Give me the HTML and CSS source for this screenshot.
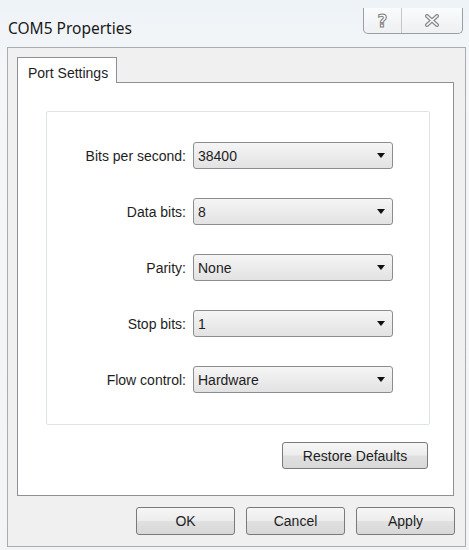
FILE: index.html
```html
<!DOCTYPE html>
<html lang="en">

<head>
  <meta charset="UTF-8">
  <title>COM5 Properties</title>
  <link rel="stylesheet" href="styles.css">
</head>

<body>
  <div class="window">
    <div class="titlebar">
      <span class="title">COM5 Properties</span>
      <div class="caption-buttons">
        <button class="cap help">?</button>
        <button class="cap close">
          <svg width="16" height="13" viewBox="0 0 16 13">
            <path d="M3 2 L13 11 M13 2 L3 11" stroke="#8a8a8a" stroke-width="4" stroke-linecap="round" fill="none" />
            <path d="M3 2 L13 11 M13 2 L3 11" stroke="#fbfbfb" stroke-width="1.6" stroke-linecap="round" fill="none" />
          </svg>
        </button>
      </div>
    </div>

    <div class="client">
      <div class="tabs">
        <div class="tab active">Port Settings</div>
      </div>
      <div class="tab-panel">
        <div class="group">
          <div class="fields">
            <label>Bits per second:</label>
            <div class="combo"><span>38400</span><span class="arrow"></span></div>
            <label>Data bits:</label>
            <div class="combo"><span>8</span><span class="arrow"></span></div>
            <label>Parity:</label>
            <div class="combo"><span>None</span><span class="arrow"></span></div>
            <label>Stop bits:</label>
            <div class="combo"><span>1</span><span class="arrow"></span></div>
            <label>Flow control:</label>
            <div class="combo"><span>Hardware</span><span class="arrow"></span></div>
          </div>
        </div>
        <div class="panel-actions">
          <button class="btn restore">Restore Defaults</button>
        </div>
      </div>
      <div class="dialog-actions">
        <button class="btn">OK</button>
        <button class="btn">Cancel</button>
        <button class="btn">Apply</button>
      </div>
    </div>
  </div>
</body>

</html>
```

FILE: styles.css
```css
body {
  margin: 0;
  padding: 0;
  background: linear-gradient(180deg, #eef3f7 0%, #f4f6f8 12%, #f3f4f5 100%);
  font-family: 'Liberation Sans', Arial, sans-serif;
  color: #1e1e1e;
}

.window {
  width: 469px;
  height: 550px;
  box-sizing: border-box;
  padding: 0 3px 3px 7px;
  display: flex;
  flex-direction: column;
}

/* title bar */

.titlebar {
  height: 47px;
  display: flex;
  align-items: flex-start;
  padding-left: 1px;
}

.title {
  margin-top: 18px;
  font-family: 'Noto Sans', sans-serif;
  font-size: 15.5px;
  line-height: 20px;
  color: #1a1a1a;
}

.caption-buttons {
  margin-left: auto;
  margin-right: 3px;
  margin-top: 8px;
  display: flex;
  height: 25px;
  border: 1px solid #9a9fa6;
  border-top: none;
  border-radius: 0 0 5px 5px;
  background: linear-gradient(180deg, #fafbfc, #eef0f2);
}

.cap {
  border: none;
  background: none;
  padding: 0;
  margin: 0;
  display: flex;
  align-items: center;
  justify-content: center;
}

.cap.help {
  width: 38px;
  border-right: 1px solid #c4c8cc;
  font-family: 'DejaVu Sans', sans-serif;
  font-weight: bold;
  font-size: 17px;
  color: #fbfbfb;
  -webkit-text-stroke: 1px #7e7e7e;
}

.cap.close {
  width: 60px;
}

/* client area */

.client {
  flex: 1;
  border: 1px solid #a9adb2;
  background: #f0f0f0;
  padding: 9px 11px 0 9px;
  display: flex;
  flex-direction: column;
}

.tabs {
  display: flex;
}

.tab {
  width: 100px;
  height: 26px;
  box-sizing: border-box;
  border: 1px solid #8d9098;
  border-bottom: none;
  background: #fff;
  font-size: 14px;
  padding: 7px 0 0 10px;
  margin-bottom: -1px;
  position: relative;
}

.tab-panel {
  height: 414px;
  box-sizing: border-box;
  border: 1px solid #8d9098;
  background: #fff;
  padding: 28px 23px 0 28px;
}

.group {
  height: 314px;
  box-sizing: border-box;
  border: 1px solid #dde3e8;
  border-radius: 2px;
  padding-top: 30px;
}

.fields {
  display: grid;
  grid-template-columns: 139px 200px;
  grid-auto-rows: 27px;
  column-gap: 7px;
  row-gap: 29px;
  align-items: center;
}

.fields label {
  text-align: right;
  font-size: 14px;
}

.combo {
  height: 27px;
  box-sizing: border-box;
  border: 1px solid #8b8e91;
  border-radius: 3px;
  background: linear-gradient(180deg, #f5f5f5 0%, #ececec 50%, #e2e2e2 100%);
  display: flex;
  align-items: center;
  padding: 0 7px 0 4px;
  font-size: 14px;
}

.combo .arrow {
  margin-left: auto;
  width: 0;
  height: 0;
  border-left: 4.5px solid transparent;
  border-right: 4.5px solid transparent;
  border-top: 5px solid #111;
}

/* buttons */

.btn {
  width: 99px;
  height: 28px;
  box-sizing: border-box;
  border: 1px solid #7a7a7a;
  border-radius: 3px;
  background: linear-gradient(180deg, #f6f6f6 0%, #ededed 48%, #e0e0e0 52%, #d8d8d8 100%);
  font-family: 'Liberation Sans', Arial, sans-serif;
  font-size: 14px;
  color: #1e1e1e;
  padding: 0;
}

.panel-actions {
  display: flex;
  justify-content: flex-end;
  margin-top: 17px;
  padding-right: 2px;
}

.btn.restore {
  width: 146px;
  height: 27px;
}

.dialog-actions {
  display: flex;
  justify-content: flex-end;
  gap: 11px;
  margin-top: 11px;
  margin-right: -1px;
}
```
